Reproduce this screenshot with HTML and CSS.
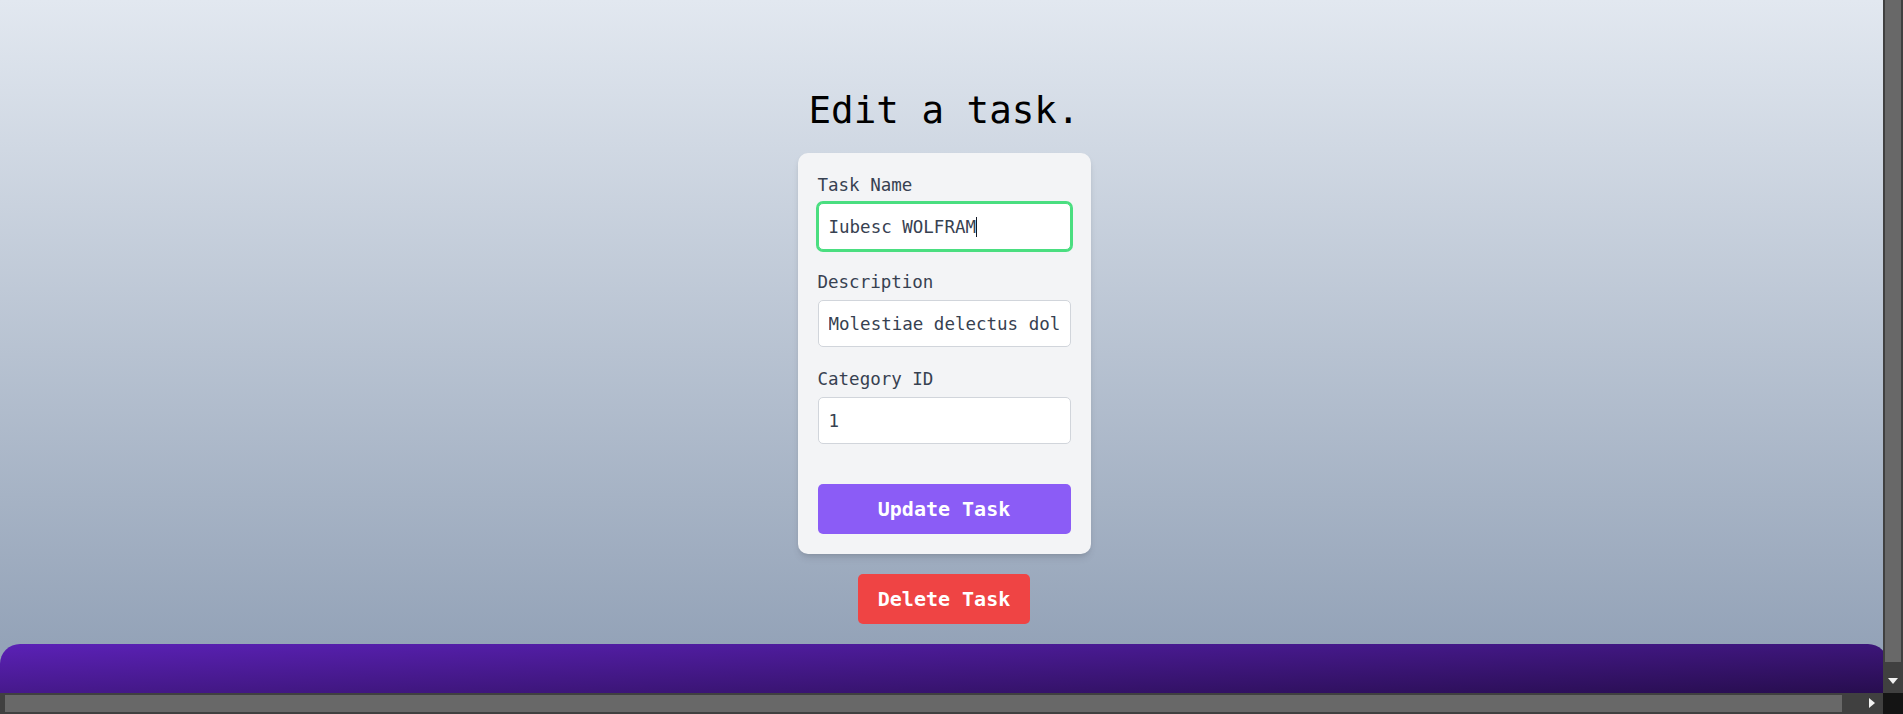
FILE: index.html
```html
<!DOCTYPE html>
<html lang="en">
<head>
<meta charset="utf-8">
<title>Edit a task</title>
<link rel="stylesheet" href="styles.css">
</head>
<body>
  <main class="page">
    <h1 class="title">Edit a task.</h1>
    <form class="card">
      <div class="field">
        <label class="label" for="name">Task Name</label>
        <div class="input-wrap">
          <input class="input input-focused" id="name" type="text" value="Iubesc WOLFRAM">
          <span class="caret"></span>
        </div>
      </div>
      <div class="field">
        <label class="label" for="desc">Description</label>
        <div class="input-wrap">
          <input class="input" id="desc" type="text" value="Molestiae delectus dolorem">
        </div>
      </div>
      <div class="field">
        <label class="label" for="cat">Category ID</label>
        <div class="input-wrap">
          <input class="input" id="cat" type="text" value="1">
        </div>
      </div>
      <button class="btn btn-update" type="button">Update Task</button>
    </form>
    <button class="btn btn-delete" type="button">Delete Task</button>
  </main>
  <footer class="footer"></footer>

  <div class="scrollbar-v">
    <div class="thumb-v"></div>
    <span class="arrow-down"></span>
  </div>
  <div class="scrollbar-h">
    <div class="thumb-h"></div>
    <span class="arrow-right"></span>
  </div>
  <div class="scroll-corner"></div>
</body>
</html>
```

FILE: styles.css
```css
html, body {
  margin: 0;
  padding: 0;
}

body {
  background: #94a3b8;
  font-family: "DejaVu Sans Mono", "Liberation Mono", monospace;
  color: #374151;
  overflow: hidden;
}

.page {
  display: flex;
  flex-direction: column;
  align-items: center;
  padding: 88px 15px 20px 0;
  background: linear-gradient(to bottom, #e2e8f0, #94a3b8);
}

.title {
  margin: 0 0 20px;
  font-size: 37.5px;
  line-height: 45px;
  font-weight: 400;
  color: #000;
}

.card {
  box-sizing: border-box;
  width: 293px;
  padding: 20px;
  background: #f3f4f6;
  border-radius: 10px;
  box-shadow: 0 5px 8px -2px rgba(0, 0, 0, 0.12), 0 2px 5px -2px rgba(0, 0, 0, 0.1);
  display: flex;
  flex-direction: column;
}

.field {
  display: flex;
  flex-direction: column;
  margin-bottom: 20px;
}

.label {
  font-size: 17.5px;
  line-height: 25px;
  margin-bottom: 5px;
  color: #374151;
}

.input-wrap {
  position: relative;
  font-size: 17.5px;
}

.input {
  box-sizing: border-box;
  width: 100%;
  height: 47px;
  padding: 10px;
  border: 1px solid #d1d5db;
  border-radius: 5px;
  background: #fff;
  font-family: inherit;
  font-size: 17.5px;
  line-height: 25px;
  color: #374151;
  outline: none;
}

.input-focused {
  border-color: #4ade80;
  box-shadow: 0 0 0 2px #4ade80;
}

.caret {
  position: absolute;
  left: calc(11px + 14ch);
  top: 14px;
  width: 1px;
  height: 20px;
  background: #111827;
}

.btn {
  border: none;
  border-radius: 5px;
  font-family: inherit;
  font-size: 20px;
  line-height: 25px;
  font-weight: 700;
  color: #fff;
  cursor: pointer;
}

.btn-update {
  margin-top: 20px;
  height: 50px;
  padding: 12px 0;
  background: #8b5cf6;
}

.btn-delete {
  margin-top: 20px;
  height: 50px;
  padding: 12px 20px;
  background: #ef4444;
}

.footer {
  width: calc(100% - 15px);
  height: 70px;
  border-radius: 20px 20px 0 0;
  background: linear-gradient(to bottom right, #5b21b6, #1e0a3c);
}

/* browser scrollbars as seen in the capture */
.scrollbar-v {
  position: fixed;
  top: 0;
  right: 0;
  width: 20px;
  height: 693px;
  background: #404040;
}

.thumb-v {
  margin: 0 2px;
  height: 662px;
  background: #686868;
}

.arrow-down {
  position: absolute;
  left: 5px;
  bottom: 9px;
  width: 0;
  height: 0;
  border-left: 5px solid transparent;
  border-right: 5px solid transparent;
  border-top: 6px solid #f2f2f2;
}

.scrollbar-h {
  position: fixed;
  left: 0;
  bottom: 0;
  width: 1883px;
  height: 21px;
  background: #404040;
}

.thumb-h {
  margin: 2px 0 0 5px;
  width: 1837px;
  height: 17px;
  background: #686868;
}

.arrow-right {
  position: absolute;
  right: 8px;
  top: 5px;
  width: 0;
  height: 0;
  border-top: 5px solid transparent;
  border-bottom: 5px solid transparent;
  border-left: 6px solid #f2f2f2;
}

.scroll-corner {
  position: fixed;
  right: 0;
  bottom: 0;
  width: 20px;
  height: 21px;
  background: #141414;
}
```
